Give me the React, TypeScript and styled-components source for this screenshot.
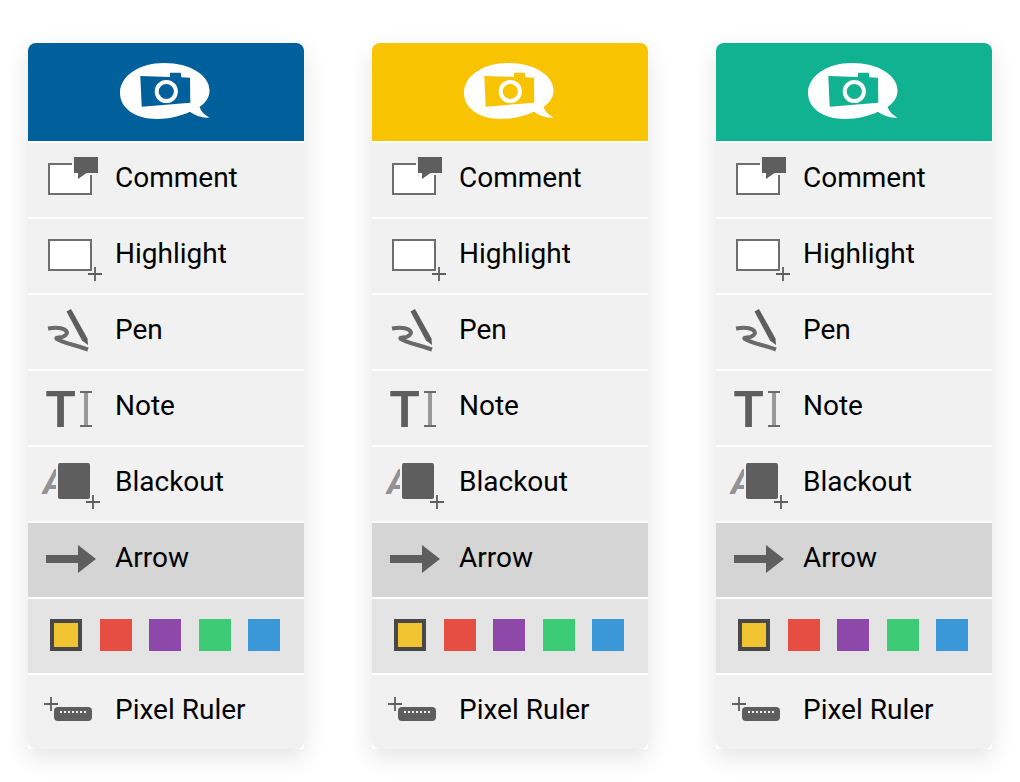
import React, { useState } from "react";
import styled, { createGlobalStyle } from "styled-components";

const GlobalStyle = createGlobalStyle`
  * { box-sizing: border-box; }
  body {
    margin: 0;
    background: #ffffff;
    font-family: Roboto, "Liberation Sans", sans-serif;
  }
`;

const Page = styled.main`
  display: grid;
  grid-template-columns: repeat(auto-fit, minmax(240px, 1fr));
  gap: 68px;
  align-items: start;
  padding: 43px 28px 33px;
`;

const Panel = styled.section`
  background: #ffffff;
  border-radius: 8px 8px 0 0;
  box-shadow: 0 8px 24px rgba(0, 0, 0, 0.11);
`;

const Brand = styled.header<{ $color: string }>`
  display: flex;
  align-items: center;
  justify-content: center;
  height: 98px;
  color: ${(p) => p.$color};
  background: ${(p) => p.$color};
  border-radius: 8px 8px 0 0;
`;

const ToolList = styled.ul`
  margin: 0;
  padding: 0;
  list-style: none;
`;

const ToolItem = styled.li`
  border-top: 2px solid #ffffff;
`;

const ToolButton = styled.button<{ $active?: boolean; $last?: boolean }>`
  display: flex;
  align-items: center;
  gap: 11px;
  width: 100%;
  height: 74px;
  padding: 0 12px;
  border: 0;
  border-radius: ${(p) => (p.$last ? "0 0 8px 8px" : "0")};
  background: ${(p) => (p.$active ? "#d5d5d5" : "#f1f1f1")};
  color: #000000;
  font-family: inherit;
  font-size: 28px;
  font-weight: 400;
  line-height: 32px;
  text-align: left;
  cursor: pointer;
`;

const ToolName = styled.span`
  padding-bottom: 4px;
  white-space: nowrap;
`;

const Icon = styled.svg`
  flex: none;
  width: 64px;
  height: 56px;
  color: #5e5e5e;
  overflow: visible;
`;

const IconText = styled.text`
  font-family: Roboto, "Liberation Sans", sans-serif;
`;

const Swatches = styled.div`
  display: flex;
  align-items: center;
  justify-content: space-between;
  height: 74px;
  padding: 0 24px 2px 22px;
  background: #e4e4e4;
`;

const Swatch = styled.input<{ $color: string }>`
  appearance: none;
  width: 32px;
  height: 32px;
  margin: 0;
  background: ${(p) => p.$color};
  cursor: pointer;

  &:checked {
    border: 4px solid #484848;
  }
`;

const Logo = () => (
  <svg width="92" height="60" viewBox="0 0 92 60" role="img" aria-label="Feedback camera">
    <path
      fill="#fff"
      d="M44 1C70 1 89.500 13 89.500 28.500C89.500 35 86 40.500 79.500 45C81.500 50 84.500 53 89.500 55.500C82 56.300 75 53.500 70 49.800C60 54.500 49 57 37 57C15 57 0 46 0 31C0 14 19 1 44 1Z"
    />
    <path fill="currentColor" d="M20.300 14L50 15V10.700H60.700L61.300 15.300L70 15.700L70.300 40.700L21.700 44.700Z" />
    <circle cx="46.300" cy="29.500" r="9.600" fill="none" stroke="#fff" strokeWidth="4" />
  </svg>
);

const Plus = ({ x, y }: { x: number; y: number }) => (
  <path d={`M${x - 7} ${y}h14M${x} ${y - 7}v14`} stroke="currentColor" strokeWidth="1.800" fill="none" />
);

const CommentIcon = () => (
  <Icon viewBox="0 0 64 56" aria-hidden="true">
    <path d="M9 12H33V24H51V42H9Z" fill="#fff" />
    <path d="M32 12H9V42H51V23" fill="none" stroke="#6e6e6e" strokeWidth="2" />
    <path d="M36 21V31L46 24H50V19Z" fill="#fff" />
    <path d="M34 5H58V21H46.500L38 27V21H34Z" fill="currentColor" />
  </Icon>
);

const HighlightIcon = () => (
  <Icon viewBox="0 0 64 56" aria-hidden="true">
    <rect x="9" y="12" width="42" height="30" fill="#fff" stroke="#6e6e6e" strokeWidth="2" />
    <Plus x={55} y={46} />
  </Icon>
);

const PenIcon = () => (
  <Icon viewBox="0 0 64 56" aria-hidden="true">
    <path d="M26.500 7.500L31 5L47.500 34.500L48 41L42 36.500Z" fill="currentColor" />
    <path
      d="M8 24.500C14 23.500 21 23.500 24.500 25.500C29 28.500 26.500 31.500 22.500 32.800C19 33.800 15.500 33.500 16.500 34.800C22 38.500 37 41.500 48 45.500"
      fill="none"
      stroke="#6a6a6a"
      strokeWidth="4"
      strokeLinejoin="round"
    />
  </Icon>
);

const NoteIcon = () => (
  <Icon viewBox="0 0 64 56" aria-hidden="true">
    <IconText x="20.500" y="47" fontSize="50" fontWeight="600" textAnchor="middle" fill="currentColor">
      T
    </IconText>
    <path d="M46 13V45" stroke="#9a9a9a" strokeWidth="4" />
    <path d="M40 12H52M40 46H52" stroke="#6a6a6a" strokeWidth="2" />
  </Icon>
);

const BlackoutIcon = () => (
  <Icon viewBox="0 0 64 56" aria-hidden="true">
    <svg width="16" height="56">
      <IconText x="3" y="38" fontSize="35" fontWeight="700" fontStyle="italic" fill="#929292">
        A
      </IconText>
    </svg>
    <rect x="18" y="7" width="32" height="36" rx="2" fill="currentColor" />
    <Plus x={53} y={46} />
  </Icon>
);

const ArrowIcon = () => (
  <Icon viewBox="0 0 64 56" aria-hidden="true">
    <path d="M6 23H38V13L56 27L38 41V31H6Z" fill="currentColor" />
  </Icon>
);

const RulerIcon = () => (
  <Icon viewBox="0 0 64 56" aria-hidden="true">
    <Plus x={11} y={20} />
    <rect x="14" y="23" width="38" height="14" rx="4" fill="currentColor" />
    <path d="M20 28H46" stroke="#f1f1f1" strokeWidth="2" strokeDasharray="2 2" />
  </Icon>
);

const tools = [
  { name: "Comment", Glyph: CommentIcon },
  { name: "Highlight", Glyph: HighlightIcon },
  { name: "Pen", Glyph: PenIcon },
  { name: "Note", Glyph: NoteIcon },
  { name: "Blackout", Glyph: BlackoutIcon },
  { name: "Arrow", Glyph: ArrowIcon },
];

const colors = [
  { name: "Yellow", value: "#f1c432" },
  { name: "Red", value: "#e74e42" },
  { name: "Purple", value: "#8e48a9" },
  { name: "Green", value: "#3bcc75" },
  { name: "Blue", value: "#3a98d9" },
];

const themes = [
  { id: "blue", color: "#00609b" },
  { id: "yellow", color: "#f8c300" },
  { id: "green", color: "#11b291" },
];

const ToolPanel = ({ id, color }: { id: string; color: string }) => {
  const [tool, setTool] = useState("Arrow");
  const [ink, setInk] = useState("Yellow");

  return (
    <Panel aria-label={`Tools, ${id} theme`}>
      <Brand $color={color}>
        <Logo />
      </Brand>
      <ToolList>
        {tools.map(({ name, Glyph }) => (
          <ToolItem key={name}>
            <ToolButton
              type="button"
              $active={tool === name}
              aria-pressed={tool === name}
              onClick={() => setTool(name)}
            >
              <Glyph />
              <ToolName>{name}</ToolName>
            </ToolButton>
          </ToolItem>
        ))}
        <ToolItem>
          <Swatches role="radiogroup" aria-label="Colour">
            {colors.map((c) => (
              <Swatch
                key={c.name}
                type="radio"
                name={`ink-${id}`}
                aria-label={c.name}
                $color={c.value}
                checked={ink === c.name}
                onChange={() => setInk(c.name)}
              />
            ))}
          </Swatches>
        </ToolItem>
        <ToolItem>
          <ToolButton
            type="button"
            $last
            $active={tool === "Pixel Ruler"}
            aria-pressed={tool === "Pixel Ruler"}
            onClick={() => setTool("Pixel Ruler")}
          >
            <RulerIcon />
            <ToolName>Pixel Ruler</ToolName>
          </ToolButton>
        </ToolItem>
      </ToolList>
    </Panel>
  );
};

export default function App() {
  return (
    <>
      <GlobalStyle />
      <Page>
        {themes.map((t) => (
          <ToolPanel key={t.id} id={t.id} color={t.color} />
        ))}
      </Page>
    </>
  );
}
